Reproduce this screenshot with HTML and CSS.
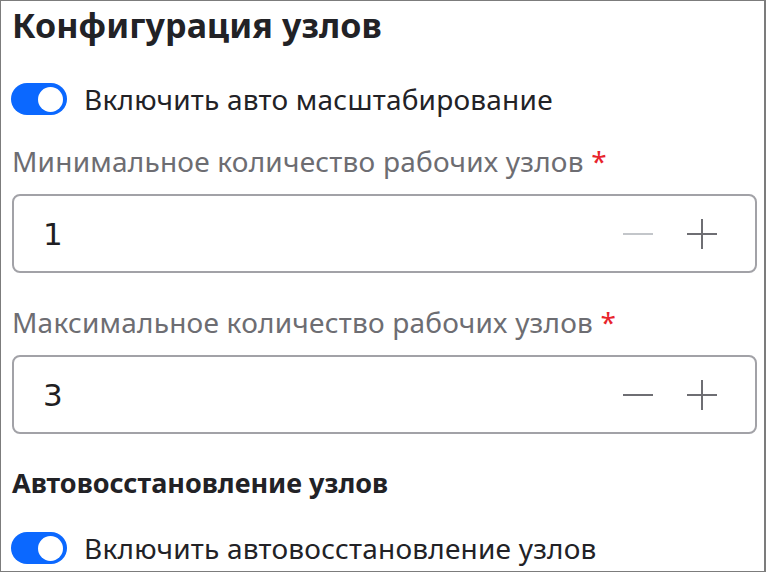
FILE: index.html
```html
<!DOCTYPE html>
<html lang="ru">
<head>
<meta charset="utf-8">
<link rel="stylesheet" href="styles.css">
</head>
<body>
<div class="frame">
  <h1 class="title">Конфигурация узлов</h1>
  <label class="switch-row first">
    <span class="switch"><span class="knob"></span></span>
    <span class="switch-text">Включить авто масштабирование</span>
  </label>
  <div class="field first">
    <div class="label">Минимальное количество рабочих узлов <span class="req">*</span></div>
    <div class="input">
      <span class="value">1</span>
      <span class="steppers">
        <svg class="step disabled" width="30" height="30" viewBox="0 0 30 30"><path d="M0 15H30" stroke="currentColor" stroke-width="2"/></svg>
        <svg class="step" width="30" height="30" viewBox="0 0 30 30"><path d="M0 15H30M15 0V30" stroke="currentColor" stroke-width="2"/></svg>
      </span>
    </div>
  </div>
  <div class="field">
    <div class="label">Максимальное количество рабочих узлов <span class="req">*</span></div>
    <div class="input">
      <span class="value">3</span>
      <span class="steppers">
        <svg class="step" width="30" height="30" viewBox="0 0 30 30"><path d="M0 15H30" stroke="currentColor" stroke-width="2"/></svg>
        <svg class="step" width="30" height="30" viewBox="0 0 30 30"><path d="M0 15H30M15 0V30" stroke="currentColor" stroke-width="2"/></svg>
      </span>
    </div>
  </div>
  <h2 class="subtitle">Автовосстановление узлов</h2>
  <label class="switch-row">
    <span class="switch"><span class="knob"></span></span>
    <span class="switch-text">Включить автовосстановление узлов</span>
  </label>
</div>
</body>
</html>
```

FILE: styles.css
```css
* { box-sizing: border-box; }
html, body { margin: 0; padding: 0; background: #fff; }
body { font-family: "Noto Sans", "Open Sans", sans-serif; color: #222226; }
.frame {
  width: 766px;
  height: 572px;
  overflow: hidden;
  border: 1px solid #7c7c7c;
  border-right-width: 2px;
  padding: 2px 7px 0 10px;
}
.title {
  margin: 0;
  font-size: 34px;
  font-weight: 700;
  line-height: 44px;
  padding-left: 1px;
  letter-spacing: 0.1px;
}
.switch-row {
  display: flex;
  align-items: center;
  gap: 17px;
  margin-top: 30px;
}
.switch-row.first { margin-top: 34px; }
.switch {
  width: 56px;
  height: 32px;
  border-radius: 16px;
  background: #0b68ff;
  display: flex;
  align-items: center;
  justify-content: flex-end;
  padding: 0 4px;
  flex: none;
}
.knob {
  width: 25px;
  height: 25px;
  border-radius: 50%;
  background: #fff;
}
.switch-text {
  font-size: 28px;
  line-height: 36px;
  letter-spacing: 0.22px;
}
.field { margin-top: 31px; padding-left: 1px; }
.field.first { margin-top: 26px; }
.label {
  font-size: 28px;
  line-height: 36px;
  color: #6d6d72;
  letter-spacing: 0.22px;
}
.req { color: #e8232b; }
.input {
  margin-top: 15px;
  height: 79px;
  border: 2px solid #a2a2a7;
  border-radius: 8px;
  display: flex;
  align-items: center;
  justify-content: space-between;
  padding: 0 38px 0 29px;
}
.value {
  font-family: "DejaVu Sans", sans-serif;
  font-size: 31px;
  color: #1f1f23;
}
.steppers { display: flex; gap: 34px; }
.step { color: #6e6e73; display: block; }
.step.disabled { color: #c3c6ca; }
.subtitle {
  margin: 32px 0 0;
  padding-left: 1px;
  font-size: 27px;
  font-weight: 700;
  line-height: 34px;
}
```
